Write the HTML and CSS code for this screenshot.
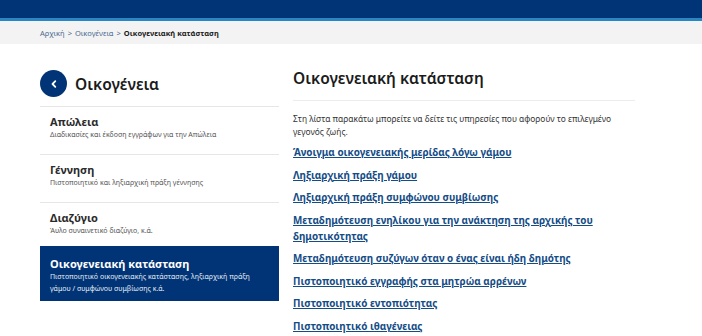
FILE: index.html
```html
<!DOCTYPE html>
<html lang="el">
<head>
<meta charset="utf-8">
<link rel="stylesheet" href="styles.css">
</head>
<body>
<header class="topbar"></header>
<nav class="crumbs">
  <a href="#">Αρχική</a><span class="sep">&gt;</span><a href="#">Οικογένεια</a><span class="sep">&gt;</span><strong>Οικογενειακή κατάσταση</strong>
</nav>
<main class="page">
  <aside class="side">
    <div class="side-head">
      <span class="back"><svg width="10" height="10" viewBox="0 0 10 10"><path d="M6.3 2.2 3.5 5l2.8 2.8" fill="none" stroke="#fff" stroke-width="1.8" stroke-linecap="round" stroke-linejoin="round"/></svg></span>
      <h2>Οικογένεια</h2>
    </div>
    <div class="item">
      <div class="item-t">Απώλεια</div>
      <div class="item-s">Διαδικασίες και έκδοση εγγράφων για την Απώλεια</div>
    </div>
    <div class="item">
      <div class="item-t">Γέννηση</div>
      <div class="item-s">Πιστοποιητικό και ληξιαρχική πράξη γέννησης</div>
    </div>
    <div class="item last">
      <div class="item-t">Διαζύγιο</div>
      <div class="item-s">Άυλο συναινετικό διαζύγιο, κ.ά.</div>
    </div>
    <div class="item active">
      <div class="item-t">Οικογενειακή κατάσταση</div>
      <div class="item-s">Πιστοποιητικό οικογενειακής κατάστασης, ληξιαρχική πράξη γάμου / συμφώνου συμβίωσης κ.ά.</div>
    </div>
  </aside>
  <section class="content">
    <h1>Οικογενειακή κατάσταση</h1>
    <p class="intro">Στη λίστα παρακάτω μπορείτε να δείτε τις υπηρεσίες που αφορούν το επιλεγμένο γεγονός ζωής.</p>
    <ul class="links">
      <li><a href="#">Άνοιγμα οικογενειακής μερίδας λόγω γάμου</a></li>
      <li><a href="#">Ληξιαρχική πράξη γάμου</a></li>
      <li><a href="#">Ληξιαρχική πράξη συμφώνου συμβίωσης</a></li>
      <li><a href="#">Μεταδημότευση ενηλίκου για την ανάκτηση της αρχικής του δημοτικότητας</a></li>
      <li><a href="#">Μεταδημότευση συζύγων όταν ο ένας είναι ήδη δημότης</a></li>
      <li><a href="#">Πιστοποιητικό εγγραφής στα μητρώα αρρένων</a></li>
      <li><a href="#">Πιστοποιητικό εντοπιότητας</a></li>
      <li><a href="#">Πιστοποιητικό ιθαγένειας</a></li>
    </ul>
  </section>
</main>
</body>
</html>
```

FILE: styles.css
```css
* { box-sizing: border-box; }
html, body { margin: 0; padding: 0; }
body {
  font-family: "Noto Sans", "Open Sans", sans-serif;
  color: #1b1b1b;
  background: #fff;
  overflow: hidden;
}
.topbar {
  background: #003476;
  border-bottom: 3px solid #2a86c3;
  height: 21px;
}
.crumbs {
  background: #f3f3f4;
  height: 23px;
  padding: 0 40px;
  display: flex;
  align-items: center;
  font-size: 7.5px;
  color: #5a6a7a;
}
.crumbs a { color: #4a6a90; text-decoration: none; }
.crumbs .sep { margin: 0 3px; color: #4a6a90; }
.crumbs strong { color: #1b1b1b; font-weight: 700; }
.page {
  display: flex;
  padding: 26px 0 0 40px;
}
.side { width: 239px; flex: none; }
.side-head {
  display: flex;
  align-items: center;
  gap: 8px;
  padding-bottom: 9px;
  border-bottom: 1px solid #e6e6e6;
}
.back {
  width: 27px; height: 27px;
  border-radius: 50%;
  background: #003476;
  display: flex; align-items: center; justify-content: center;
}
.side-head h2 {
  margin: 0;
  font-size: 15.5px;
  font-weight: 600;
  color: #1b1b1b;
}
.item {
  padding: 7px 10px 14px 10px;
  border-bottom: 1px solid #e6e6e6;
}
.item.last { border-bottom: none; padding-bottom: 10px; }
.item-t { font-size: 11px; font-weight: 700; color: #2b2b2b; line-height: 15px; }
.item-s { font-size: 7px; color: #555; line-height: 11px; }
.item.active {
  background: #003476;
  color: #fff;
  border-bottom: none;
  padding: 10px 10px 6px 10px;
}
.item.active .item-t { color: #fff; }
.item.active .item-s { color: #e6ecf4; line-height: 12px; }
.content {
  margin-left: 14px;
  width: 342px;
}
.content h1 {
  margin: -3px 0 0;
  font-size: 15.5px;
  font-weight: 600;
  line-height: 22px;
  padding-bottom: 11px;
  border-bottom: 1px solid #ececec;
}
.intro {
  margin: 11px 0 0;
  font-size: 8.4px;
  line-height: 13px;
  color: #333;
}
.links { list-style: none; margin: 6px 0 0; padding: 0; }
.links li { margin-bottom: 6.5px; font-size: 9.9px; line-height: 16px; }
.links a { color: #144c86; font-weight: 700; text-decoration: underline; text-underline-offset: 1px; }
```
